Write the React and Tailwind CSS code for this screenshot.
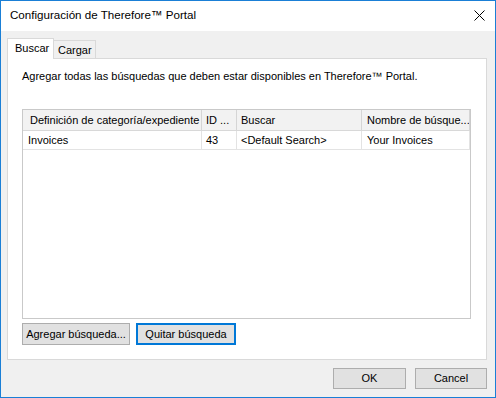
export default function App() {
  const font = { fontFamily: '"Liberation Sans", Arial, sans-serif' };
  return (
    <div style={font} className="w-[496px] h-[398px] border border-[#1a7fd6] bg-[#f0f0f0] flex flex-col text-[11px] text-black leading-none whitespace-nowrap">
      <div className="h-[30px] bg-white flex items-center justify-between pl-[9px] pr-[10px] shrink-0">
        <span className="text-[11.6px] mt-[-2px]">Configuración de Therefore™ Portal</span>
        <svg width="11" height="11" viewBox="0 0 11 11" className="mt-[-1px]">
          <path d="M0.5 0.5 L10.5 10.5 M10.5 0.5 L0.5 10.5" stroke="#000" strokeWidth="1" fill="none" />
        </svg>
      </div>
      <div className="flex-1 flex flex-col pt-[7px] pl-[6px] pr-[8px]">
        <div className="flex items-end h-[20px] relative z-10">
          <div className="h-[21px] bg-white border border-b-0 border-[#d9d9d9] w-[47px] flex items-center pl-[7px] mb-[-1px]">
            <span className="mt-[-1px]">Buscar</span>
          </div>
          <div className="h-[18px] bg-[#f0f0f0] border border-l-0 border-b-0 border-[#d9d9d9] w-[42px] flex items-center pl-[4px]">
            <span className="mt-[1px]">Cargar</span>
          </div>
        </div>
        <div className="h-[302px] w-[480px] bg-white border border-[#d9d9d9] flex flex-col pl-[14px] pr-[15px]">
          <div className="h-[34px] flex items-center">
            Agregar todas las búsquedas que deben estar disponibles en Therefore™ Portal.
          </div>
          <div className="mt-[16px] h-[210px] border border-[#c9c9c9] bg-white flex flex-col">
            <div className="grid grid-cols-[179px_35px_125px_108px] h-[21px] border-b border-[#d8d8d8] bg-[#f2f2f2]">
              <div className="border-r border-[#d5d5d5] flex items-center pl-[7px] overflow-hidden">Definición de categoría/expediente</div>
              <div className="border-r border-[#d5d5d5] flex items-center pl-[4px] overflow-hidden">ID ...</div>
              <div className="border-r border-[#d5d5d5] flex items-center pl-[4px] overflow-hidden">Buscar</div>
              <div className="border-r border-[#d5d5d5] flex items-center pl-[5px] overflow-hidden">Nombre de búsque...</div>
            </div>
            <div className="grid grid-cols-[179px_35px_125px_108px] h-[19px] border-b border-[#e3e3e3]">
              <div className="border-r border-[#e3e3e3] flex items-center pl-[5px] overflow-hidden">Invoices</div>
              <div className="border-r border-[#e3e3e3] flex items-center pl-[4px] overflow-hidden">43</div>
              <div className="border-r border-[#e3e3e3] flex items-center pl-[4px] overflow-hidden">&lt;Default Search&gt;</div>
              <div className="border-r border-[#e3e3e3] flex items-center pl-[5px] overflow-hidden">Your Invoices</div>
            </div>
          </div>
          <div className="mt-[4px] flex gap-[6px]">
            <button className="h-[22px] w-[108px] bg-[#e1e1e1] border border-[#adadad] flex items-center justify-center">
              Agregar búsqueda...
            </button>
            <button className="h-[22px] w-[100px] bg-[#e1e1e1] border-2 border-[#0078d7] flex items-center justify-center">
              Quitar búsqueda
            </button>
          </div>
        </div>
        <div className="mt-[8px] flex justify-end gap-[9px]">
          <button className="h-[21px] w-[73px] bg-[#e1e1e1] border border-[#adadad] flex items-center justify-center">OK</button>
          <button className="h-[21px] w-[72px] bg-[#e1e1e1] border border-[#adadad] flex items-center justify-center">Cancel</button>
        </div>
      </div>
    </div>
  );
}
